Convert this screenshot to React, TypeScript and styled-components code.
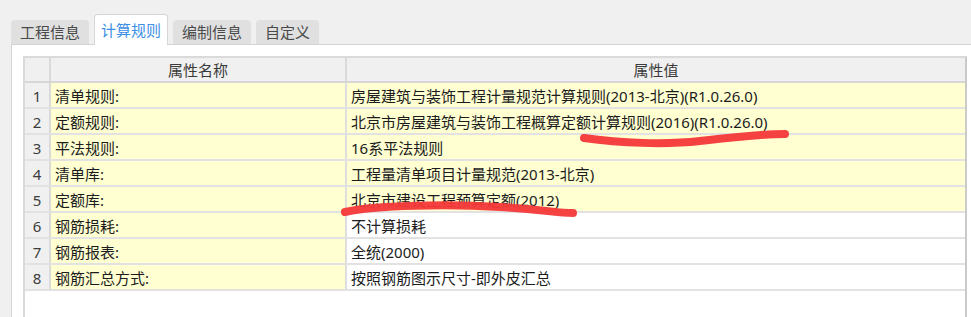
import styled, { createGlobalStyle } from 'styled-components'

const rows = [
  { name: '清单规则:', value: '房屋建筑与装饰工程计量规范计算规则(2013-北京)(R1.0.26.0)', hl: true },
  { name: '定额规则:', value: '北京市房屋建筑与装饰工程概算定额计算规则(2016)(R1.0.26.0)', hl: true },
  { name: '平法规则:', value: '16系平法规则', hl: true },
  { name: '清单库:', value: '工程量清单项目计量规范(2013-北京)', hl: true },
  { name: '定额库:', value: '北京市建设工程预算定额(2012)', hl: true },
  { name: '钢筋损耗:', value: '不计算损耗', hl: false },
  { name: '钢筋报表:', value: '全统(2000)', hl: false },
  { name: '钢筋汇总方式:', value: '按照钢筋图示尺寸-即外皮汇总', hl: false },
]

const tabs = ['工程信息', '计算规则', '编制信息', '自定义']

export default function App() {
  return (
    <Page>
      <GlobalStyle />
      <TabBar>
        {tabs.map((t, i) => (
          <Tab key={t} $active={i === 1}>
            {t}
          </Tab>
        ))}
      </TabBar>
      <Panel>
        <Grid>
          <Row $header>
            <NumCell />
            <HeadCell>属性名称</HeadCell>
            <HeadCell>属性值</HeadCell>
          </Row>
          {rows.map((r, i) => (
            <Row key={r.name}>
              <NumCell>{i + 1}</NumCell>
              <Cell $hl>{r.name}</Cell>
              <Cell $hl={r.hl}>{r.value}</Cell>
            </Row>
          ))}
        </Grid>
      </Panel>
      {/* hand drawn red marks on the screenshot */}
      <Marks width="971" height="317" viewBox="0 0 971 317">
        <path d="M584 138 C 620 143, 665 145, 700 141 S 760 134, 785 134" />
        <path d="M345 212 C 375 205, 450 204, 500 207 S 555 213, 573 213" />
      </Marks>
    </Page>
  )
}

const GlobalStyle = createGlobalStyle`
  body {
    margin: 0;
    background: #f0f0f0;
    font-family: "Noto Sans", "Noto Sans CJK SC", sans-serif;
  }
`

const Page = styled.div`
  position: relative;
  width: 971px;
  height: 317px;
  overflow: hidden;
  background: #f0f0f0;
  display: flex;
  flex-direction: column;
  padding-top: 15px;
  box-sizing: border-box;
`

const TabBar = styled.div`
  display: flex;
  align-items: flex-end;
  gap: 5px;
  padding-left: 11px;
  height: 29px;
  position: relative;
  z-index: 1;
`

const Tab = styled.div<{ $active?: boolean }>`
  box-sizing: border-box;
  height: ${(p) => (p.$active ? '31px' : '24px')};
  margin-bottom: ${(p) => (p.$active ? '-1px' : '0')};
  padding: ${(p) => (p.$active ? '0 6px' : '0 8px')};
  display: flex;
  align-items: center;
  font-size: 15px;
  color: ${(p) => (p.$active ? '#3d8fe6' : '#4a4a4a')};
  background: ${(p) => (p.$active ? '#ffffff' : '#e0e0e0')};
  border: 1px solid ${(p) => (p.$active ? '#d6d6d6' : '#e0e0e0')};
  border-bottom: none;
  border-radius: 4px 4px 0 0;
  line-height: 1;
`

const Panel = styled.div`
  flex: 1;
  margin-left: 11px;
  background: #ffffff;
  border-top: 1px solid #d4d4d4;
  border-left: 1px solid #d4d4d4;
  padding: 11px 4px 0 11px;
  display: flex;
  flex-direction: column;
`

const Grid = styled.div`
  flex: 1;
  border: 2px solid #dadada;
  border-right: 2px solid #cacaca;
  border-bottom: none;
`

const Row = styled.div<{ $header?: boolean }>`
  display: grid;
  grid-template-columns: 26px 296px 1fr;
  height: ${(p) => (p.$header ? '25px' : '26px')};
  box-sizing: border-box;
  border-bottom: 2px solid ${(p) => (p.$header ? '#d6d6d6' : '#e2e2e2')};
  background: ${(p) => (p.$header ? '#f0f0f0' : 'transparent')};
`

const NumCell = styled.div`
  background: #f0f0f0;
  border-right: 2px solid #dadada;
  display: flex;
  align-items: center;
  justify-content: center;
  font-size: 15px;
  color: #3c3c3c;
  padding-top: 1px;
`

const HeadCell = styled.div`
  border-right: 2px solid #dadada;
  display: flex;
  align-items: center;
  justify-content: center;
  font-size: 15px;
  color: #3a3a3a;
  &:last-child {
    border-right: none;
  }
`

const Cell = styled.div<{ $hl?: boolean }>`
  background: ${(p) => (p.$hl ? '#ffffd2' : '#ffffff')};
  border-right: 2px solid #dedede;
  display: flex;
  align-items: center;
  padding: 1px 0 0 4px;
  font-size: 15px;
  color: #1c1c1c;
  white-space: nowrap;
  &:last-child {
    border-right: none;
  }
`

const Marks = styled.svg`
  position: absolute;
  left: 0;
  top: 0;
  pointer-events: none;
  z-index: 2;
  path {
    fill: none;
    stroke: #f43838;
    stroke-width: 8;
    stroke-linecap: round;
    opacity: 0.95;
  }
`
